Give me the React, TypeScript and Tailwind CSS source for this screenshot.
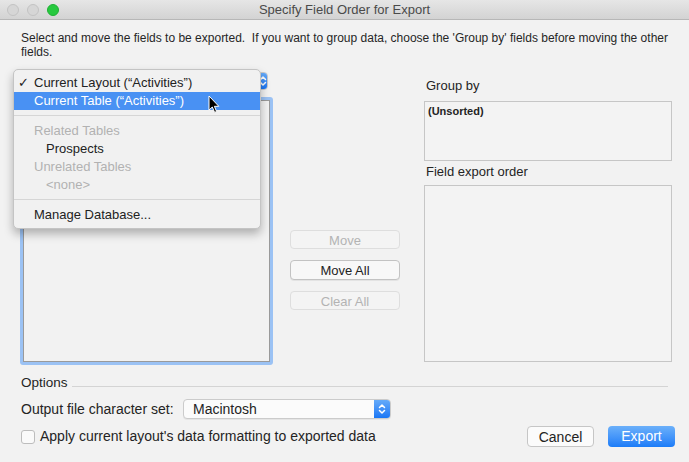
import React from 'react';

function Stepper({ className }: { className: string }) {
  return (
    <div className={`flex items-center justify-center bg-gradient-to-b from-[#64aaf9] to-[#1776f5] ${className}`}>
      <svg width="8" height="12" viewBox="0 0 8 12" fill="none" stroke="white" strokeWidth="1.5" strokeLinecap="round" strokeLinejoin="round">
        <path d="M1.5 4.5 L4 2 L6.5 4.5" />
        <path d="M1.5 7.5 L4 10 L6.5 7.5" />
      </svg>
    </div>
  );
}

function Light({ color, border }: { color: string; border: string }) {
  return <div className={`w-[12px] h-[12px] rounded-full border ${color} ${border}`} />;
}

export default function App() {
  return (
    <div className="w-[689px] h-[462px] bg-[#f2f2f2] relative overflow-hidden font-['Liberation_Sans',Arial,sans-serif] text-[#242424]">
      {/* Title bar */}
      <div className="h-[20px] flex items-center bg-gradient-to-b from-[#e6e6e6] to-[#d3d3d3] border-b border-[#b7b7b7]">
        <div className="w-[80px] flex gap-[8px] pl-[7px]">
          <Light color="bg-[#d6d6d6]" border="border-[#c3c3c3]" />
          <Light color="bg-[#d6d6d6]" border="border-[#c3c3c3]" />
          <Light color="bg-[#27c93f]" border="border-[#1fb134]" />
        </div>
        <div className="flex-1 text-center text-[13px] text-[#4a4a4a] leading-[20px]">Specify Field Order for Export</div>
        <div className="w-[80px]" />
      </div>

      <div className="pl-[21px] pr-[17px]">
        <p className="mt-[11px] text-[12px] leading-[14px] text-[#262626]">
          Select and move the fields to be exported.&nbsp; If you want to group data, choose the 'Group by' fields before moving the other fields.
        </p>

        {/* Main row */}
        <div className="flex mt-[13px]">
          {/* Left column: table popup + field list */}
          <div className="w-[253px] -ml-[1px]">
            <div className="h-[18px] mr-[5px] flex rounded-[4px] border border-[#c9c9c9] bg-[#fbfbfb] overflow-hidden">
              <div className="flex-1" />
              <Stepper className="w-[9px]" />
            </div>
            <div className="mt-[7px] h-[268px] rounded-[3px] border-[3px] border-[#9bc2f4]">
              <div className="h-full border border-[#9a9a9a] bg-[#f2f2f2]" />
            </div>
          </div>

          {/* Middle buttons */}
          <div className="ml-[17px] w-[110px] pt-[158px] flex flex-col gap-[11px] text-[13px]">
            <button className="h-[19px] rounded-[4px] border border-[#dedede] bg-[#f4f4f4] text-[#b3b3b3]">Move</button>
            <button className="h-[20px] rounded-[4px] border border-[#c3c3c3] bg-[#f8f8f8] text-[#222] shadow-[0_1px_0_rgba(0,0,0,0.06)]">Move All</button>
            <button className="h-[19px] rounded-[4px] border border-[#dedede] bg-[#f4f4f4] text-[#b3b3b3]">Clear All</button>
          </div>

          {/* Right column */}
          <div className="ml-[24px] w-[248px] flex flex-col">
            <div className="mt-[6px] h-[16px] leading-[16px] text-[13px] pl-[2px]">Group by</div>
            <div className="mt-[7px] h-[60px] border border-[#c6c6c6] bg-[#f3f3f3] px-[3px] pt-[2px] text-[11px] font-bold leading-[14px]">
              (Unsorted)
            </div>
            <div className="mt-[3px] h-[16px] leading-[16px] text-[13px] pl-[2px]">Field export order</div>
            <div className="mt-[5px] h-[177px] border border-[#c6c6c6] bg-[#f3f3f3]" />
          </div>
        </div>

        {/* Options */}
        <div className="mt-[10px] flex items-center h-[16px] text-[13.5px]">
          <span className="leading-[16px]">Options</span>
          <div className="flex-1 h-px bg-[#d4d4d4] ml-[4px] mr-[4px] mt-[6px]" />
        </div>

        <div className="mt-[8px] flex items-center h-[20px] text-[14px]">
          <span className="w-[162px]">Output file character set:</span>
          <div className="w-[208px] h-[20px] flex rounded-[4px] border border-[#cbcbcb] bg-[#fbfbfb] overflow-hidden shadow-[0_1px_0_rgba(0,0,0,0.05)]">
            <span className="flex-1 pl-[9px] leading-[18px]">Macintosh</span>
            <Stepper className="w-[16px]" />
          </div>
        </div>

        <div className="mt-[7px] flex items-center h-[21px] text-[14px]">
          <div className="w-[14px] h-[14px] rounded-[3px] border border-[#bdbdbd] bg-[#fafafa]" />
          <span className="ml-[5px]">Apply current layout's data formatting to exported data</span>
          <button className="ml-auto w-[67px] h-[21px] rounded-[4px] border border-[#c6c6c6] bg-[#fbfbfb] text-[#222]">Cancel</button>
          <button className="ml-[14px] -mr-[3px] w-[67px] h-[21px] rounded-[4px] bg-gradient-to-b from-[#6bb0fa] to-[#1a7cf8] text-white">Export</button>
        </div>
      </div>

      {/* Open popup menu */}
      <div className="absolute left-[13px] top-[69px] w-[248px] h-[160px] rounded-[5px] border border-[#c4c4c4] bg-[#f1f1f1] shadow-[0_5px_10px_rgba(0,0,0,0.28)] pt-[4px] text-[13px] leading-[18px] text-[#222]">
        <div className="h-[18px] flex">
          <span className="w-[20px] pl-[4px]">✓</span>
          <span>Current Layout (“Activities”)</span>
        </div>
        <div className="h-[18px] flex bg-[#4991f3] text-white">
          <span className="w-[20px]" />
          <span>Current Table (“Activities”)</span>
        </div>
        <div className="mt-[5px] mb-[6px] h-px bg-[#d6d6d6]" />
        <div className="h-[18px] pl-[20px] text-[#b2b2b2]">Related Tables</div>
        <div className="h-[18px] pl-[32px]">Prospects</div>
        <div className="h-[18px] pl-[20px] text-[#b2b2b2]">Unrelated Tables</div>
        <div className="h-[18px] pl-[32px] text-[#b2b2b2]">&lt;none&gt;</div>
        <div className="mt-[5px] mb-[6px] h-px bg-[#d6d6d6]" />
        <div className="h-[18px] pl-[20px]">Manage Database...</div>
      </div>

      {/* Mouse cursor */}
      <svg className="absolute left-[208px] top-[95px]" width="12" height="19" viewBox="0 0 12 19">
        <path d="M1 1 L1 15 L4.3 12 L6.6 17.4 L8.6 16.5 L6.4 11.3 L10.8 11.3 Z" fill="black" stroke="white" strokeWidth="1" strokeLinejoin="round" />
      </svg>
    </div>
  );
}
